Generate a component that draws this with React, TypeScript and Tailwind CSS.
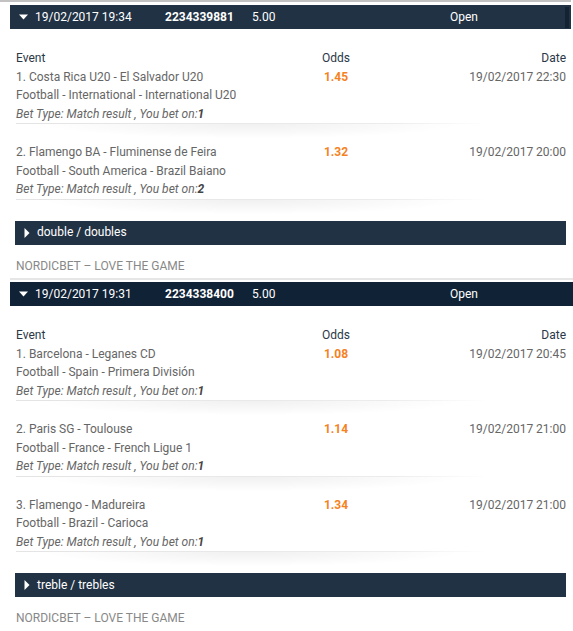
import React from 'react';

type Leg = {
  name: string;
  odds: string;
  date: string;
  league: string;
  pick: string;
};

type Bet = {
  placed: string;
  id: string;
  stake: string;
  status: string;
  kind: string;
  dark?: boolean;
  legs: Leg[];
};

const bets: Bet[] = [
  {
    placed: '19/02/2017 19:34',
    id: '2234339881',
    stake: '5.00',
    status: 'Open',
    kind: 'double / doubles',
    legs: [
      {
        name: '1. Costa Rica U20 - El Salvador U20',
        odds: '1.45',
        date: '19/02/2017 22:30',
        league: 'Football - International - International U20',
        pick: '1',
      },
      {
        name: '2. Flamengo BA - Fluminense de Feira',
        odds: '1.32',
        date: '19/02/2017 20:00',
        league: 'Football - South America - Brazil Baiano',
        pick: '2',
      },
    ],
  },
  {
    placed: '19/02/2017 19:31',
    id: '2234338400',
    stake: '5.00',
    status: 'Open',
    kind: 'treble / trebles',
    dark: true,
    legs: [
      {
        name: '1. Barcelona - Leganes CD',
        odds: '1.08',
        date: '19/02/2017 20:45',
        league: 'Football - Spain - Primera División',
        pick: '1',
      },
      {
        name: '2. Paris SG - Toulouse',
        odds: '1.14',
        date: '19/02/2017 21:00',
        league: 'Football - France - French Ligue 1',
        pick: '1',
      },
      {
        name: '3. Flamengo - Madureira',
        odds: '1.34',
        date: '19/02/2017 21:00',
        league: 'Football - Brazil - Carioca',
        pick: '1',
      },
    ],
  },
];

const CaretDown = () => (
  <svg width="9" height="6" viewBox="0 0 9 6">
    <path d="M0 0.5h9L4.5 5.5z" fill="#fff" />
  </svg>
);

const CaretRight = () => (
  <svg width="6" height="10" viewBox="0 0 6 10">
    <path d="M0.5 0v10L5.5 5z" fill="#fff" />
  </svg>
);

const LegRow: React.FC<{ leg: Leg }> = ({ leg }) => (
  <div>
    <div className="flex">
      <div className="w-[290px] text-[#666]">{leg.name}</div>
      <div className="w-[60px] text-center font-bold text-[#f5821f]">{leg.odds}</div>
      <div className="flex-1 text-right text-[#666]">{leg.date}</div>
    </div>
    <div className="text-[#666]">{leg.league}</div>
    <div className="italic text-[#666]">
      Bet Type: Match result , You bet on:<span className="font-bold text-[#444]">{leg.pick}</span>
    </div>
    <div className="w-[471px] h-px bg-[linear-gradient(to_right,#e4e4e4,#ececec_80%,transparent)]" />
    <div className="w-[471px] h-[19px] bg-[radial-gradient(ellipse_60%_100%_at_50%_0%,rgba(0,0,0,0.06),transparent_75%)]" />
  </div>
);

const BetCard: React.FC<{ bet: Bet }> = ({ bet }) => (
  <div className="pl-[10px]">
    <div
      className={
        bet.dark
          ? 'mt-[2px] h-[24px] flex items-center bg-[#102235] text-white'
          : 'mt-[3px] mr-[2px] h-[24px] flex items-center bg-[#213244] text-white'
      }
    >
      <span className="w-[25px] pl-[9px] flex items-center">
        <CaretDown />
      </span>
      <span className="w-[130px]">{bet.placed}</span>
      <span className="w-[87px] font-bold">{bet.id}</span>
      <span className="w-[198px]">{bet.stake}</span>
      <span className="flex-1">{bet.status}</span>
      {!bet.dark && <span className="w-[4px] h-[21px] bg-[#142333] mr-[2px]" />}
    </div>

    <div className="pl-[6px] pr-[7px] pt-[20px]">
      <div className="flex text-[#2b3848]">
        <div className="w-[290px]">Event</div>
        <div className="w-[60px] text-center">Odds</div>
        <div className="flex-1 text-right">Date</div>
      </div>
      {bet.legs.map((leg) => (
        <LegRow key={leg.name} leg={leg} />
      ))}
    </div>

    <div className="mt-[2px] ml-[5px] mr-[7px] h-[24px] flex items-center bg-[#213244] text-white">
      <span className="pl-[9px] w-[22px] flex items-center">
        <CaretRight />
      </span>
      <span>{bet.kind}</span>
    </div>

    <div className="mt-[12px] pl-[6px] text-[#888] uppercase">NORDICBET – LOVE THE GAME</div>
    <div className="mt-[3px] h-[2px] bg-[#e6e6e6]" />
  </div>
);

export default function App() {
  return (
    <div className="w-[573px] bg-white font-['Roboto',sans-serif] text-[12px] leading-[18.5px]">
      <div className="h-[2px] mr-[2px] bg-[#c2c2c2]" />
      {bets.map((bet) => (
        <BetCard key={bet.id} bet={bet} />
      ))}
    </div>
  );
}
